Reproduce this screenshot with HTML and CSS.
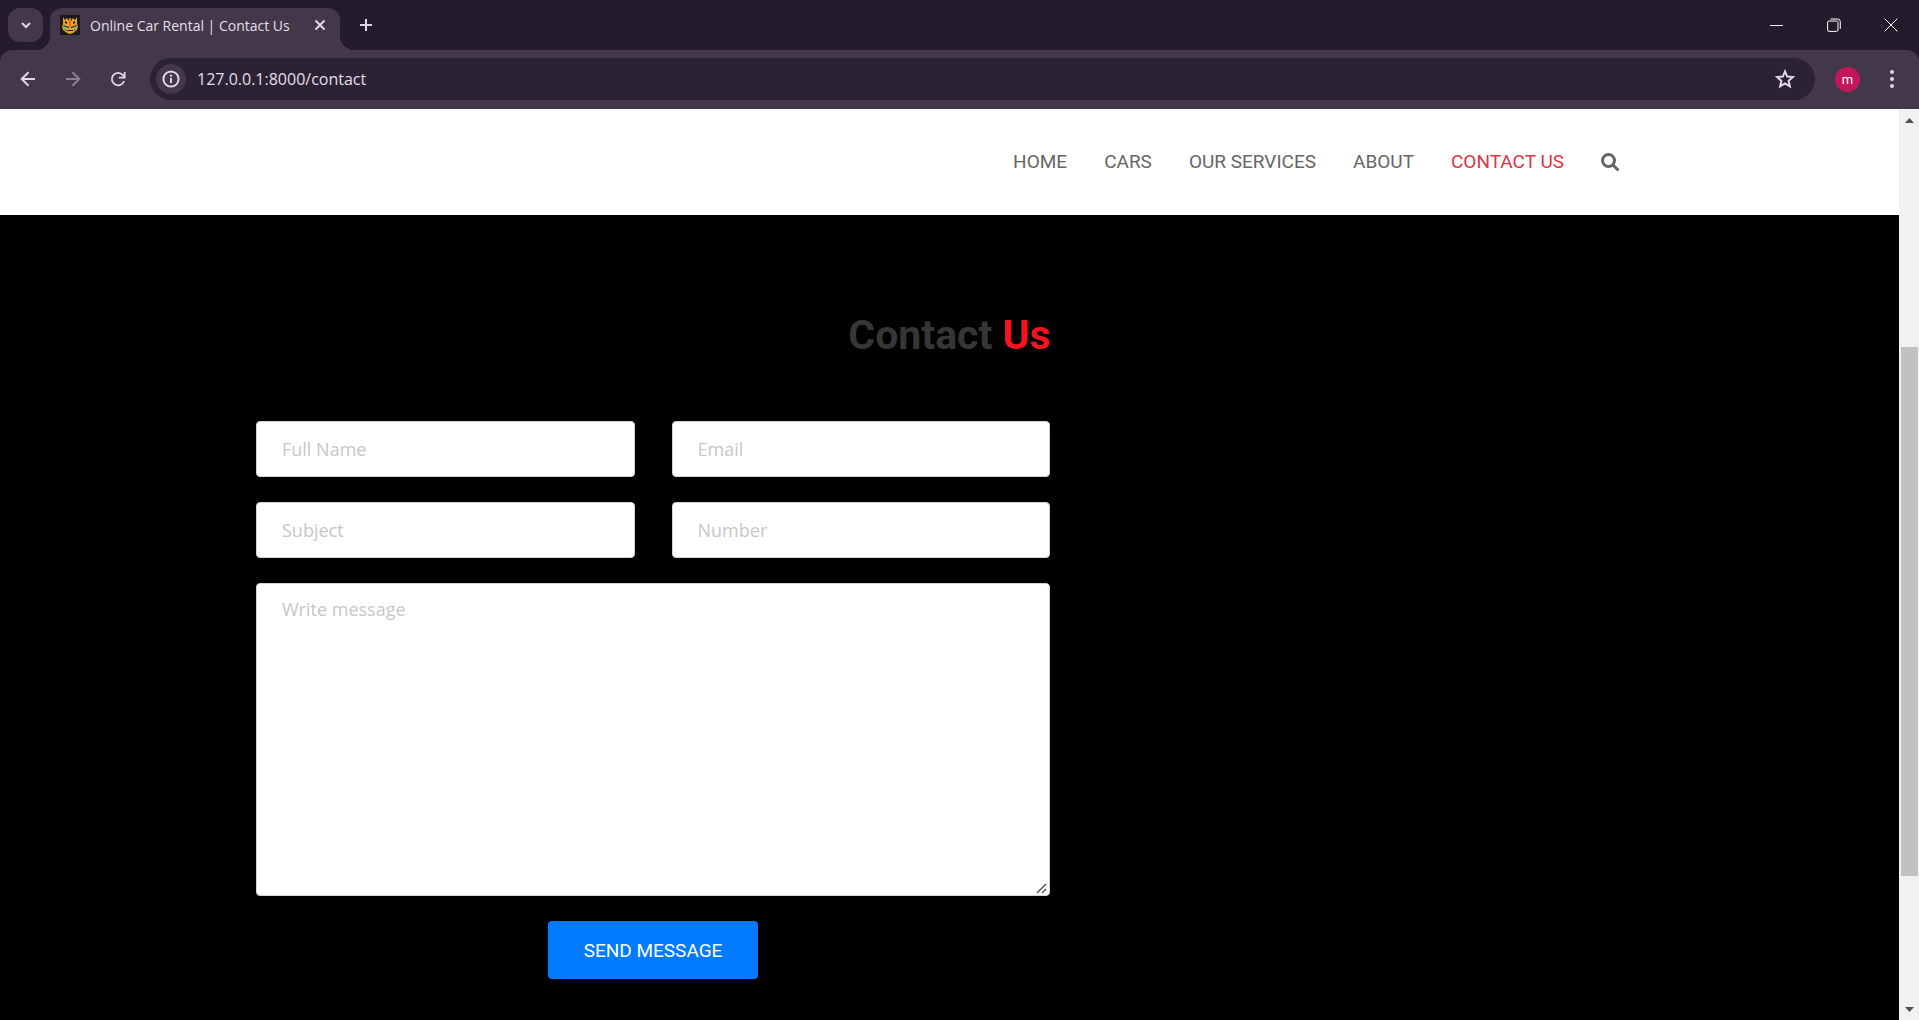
FILE: index.html
```html
<!DOCTYPE html>
<html lang="en">
<head>
<meta charset="utf-8">
<title>Online Car Rental | Contact Us</title>
<link rel="stylesheet" href="styles.css">
</head>
<body>
<header class="browser">
  <div class="tabstrip">
    <button class="tab-search" aria-label="Search tabs"><svg width="16" height="16" viewBox="0 0 16 16"><path d="M4 6l4 4 4-4"/></svg></button>
    <div class="tab">
      <svg class="favicon" width="20" height="20" viewBox="0 0 20 20"><rect width="20" height="20" fill="#171a17"/><path fill="#e9a51b" d="M3 2l2 3 2-2 2 3V3h2v3l2-3 2 2 2-3v7l1 2-1 4-4 3-3 1-3-1-4-3-1-4 1-2z"/><path fill="#f26a28" d="M9 3h2v8l-1 2-1-2z"/><path fill="#171a17" d="M5 6l2 1v2L5 8zm10 0l-2 1v2l2-1zM3 10l6 2v1l-5-1zm14 0l-6 2v1l5-1zM7 15h6v1H7zM4 14l2 1v1zm12 0l-2 1v1z"/><path fill="#36c5f0" d="M4 11l4 2-3 1zm12 0l-4 2 3 1z"/></svg>
      <span class="tab-title">Online Car Rental | Contact Us</span>
      <button class="tab-close" aria-label="Close tab"><svg width="12" height="12" viewBox="0 0 12 12"><path d="M1.500 1.500l9 9m0-9l-9 9"/></svg></button>
    </div>
    <button class="new-tab" aria-label="New tab"><svg width="14" height="14" viewBox="0 0 14 14"><path d="M7 1v12M1 7h12"/></svg></button>
    <div class="window-controls">
      <button aria-label="Minimize"><svg width="14" height="14" viewBox="0 0 14 14"><path d="M0 7.500h13"/></svg></button>
      <button aria-label="Restore"><svg width="14" height="14" viewBox="0 0 14 14"><rect x=".6" y="3" width="10.400" height="10.400" rx="1.500"/><path d="M3.500 1h7a2.800 2.800 0 0 1 2.800 2.800v7"/></svg></button>
      <button aria-label="Close"><svg width="14" height="14" viewBox="0 0 14 14"><path d="M.6.6l12.800 12.800m0-12.800L.6 13.400"/></svg></button>
    </div>
  </div>
  <div class="toolbar">
    <button class="tool" aria-label="Back"><svg width="16" height="16" viewBox="0 0 16 16"><path d="M15 8H2M8.500 1.200L1.700 8l6.800 6.800"/></svg></button>
    <button class="tool tool-disabled" aria-label="Forward"><svg width="16" height="16" viewBox="0 0 16 16"><path d="M1 8h13M7.500 1.200L14.300 8l-6.800 6.800"/></svg></button>
    <button class="tool" aria-label="Reload"><svg width="16" height="16" viewBox="0 0 18 18"><path d="M15.800 11.200A7 7 0 1 1 14.500 4.600l1.500 2M16.500 1v6.500H10"/></svg></button>
    <div class="address">
      <button class="site-info" aria-label="Site information"><svg width="18" height="18" viewBox="0 0 18 18"><circle cx="9" cy="9" r="7.600"/><path d="M9 8v5M9 4.800v2"/></svg></button>
      <input class="url" type="text" aria-label="Address" value="127.0.0.1:8000/contact">
      <button class="bookmark" aria-label="Bookmark this page"><svg width="20" height="20" viewBox="0 0 20 20"><path d="M10 2.400l2.200 5.200 5.700.5-4.300 3.700 1.300 5.600-4.900-3-4.900 3 1.300-5.600L2.100 8.100l5.700-.5z"/></svg></button>
    </div>
    <button class="avatar">m</button>
    <button class="menu" aria-label="Menu"><svg width="4" height="18" viewBox="0 0 4 18"><circle cx="2" cy="2" r="2"/><circle cx="2" cy="9" r="2"/><circle cx="2" cy="16" r="2"/></svg></button>
  </div>
</header>
<div class="viewport">
  <div class="page">
    <nav class="site-nav">
      <div class="container nav-links">
        <a href="#">HOME</a>
        <a href="#">CARS</a>
        <a href="#">OUR SERVICES</a>
        <a href="#">ABOUT</a>
        <a class="active" href="#">CONTACT US</a>
        <a href="#" aria-label="Search"><svg width="18" height="18" viewBox="0 0 18 18"><circle cx="7.500" cy="7.500" r="6"/><path d="M12 12l4.500 4.500"/></svg></a>
      </div>
    </nav>
    <main class="contact">
      <h1>Contact <span>Us</span></h1>
      <div class="container grid">
        <form class="form">
          <input type="text" placeholder="Full Name" aria-label="Full Name">
          <input type="email" placeholder="Email" aria-label="Email">
          <input type="text" placeholder="Subject" aria-label="Subject">
          <input type="text" placeholder="Number" aria-label="Number">
          <textarea placeholder="Write message" aria-label="Write message"></textarea>
          <button type="submit">SEND MESSAGE</button>
        </form>
      </div>
    </main>
  </div>
  <div class="scrollbar">
    <svg width="9" height="5" viewBox="0 0 9 5"><path d="M0 5l4.500-5L9 5z"/></svg>
    <div class="track"><div class="thumb"></div></div>
    <svg width="9" height="5" viewBox="0 0 9 5"><path d="M0 0l4.500 5L9 0z"/></svg>
  </div>
</div>
</body>
</html>
```
FILE: styles.css
```css
* { box-sizing: border-box; }
body { margin: 0; height: 100vh; display: flex; flex-direction: column; overflow: hidden; background: #000; }
button { border: 0; padding: 0; background: none; display: flex; align-items: center; justify-content: center; flex: none; }
svg { display: block; flex: none; }

.browser { background: #241b2d; color: #e6dfe9; font-family: "Open Sans", sans-serif; flex: none; }
.browser svg:not(.favicon) { fill: none; stroke: #e0d6e6; stroke-width: 2; }
.tabstrip { height: 50px; display: flex; align-items: center; padding-left: 8px; }
.tab-search { width: 35px; height: 34px; border-radius: 12px; background: #42384a; }
.tab { position: relative; align-self: flex-end; height: 42px; width: 290px; margin-left: 7px; padding: 0 14px 8px 10px; display: flex; align-items: center; background: #42384a; border-radius: 12px 12px 0 0; }
.tab::before, .tab::after { content: ""; position: absolute; bottom: 0; width: 14px; height: 14px; }
.tab::before { left: -14px; background: radial-gradient(circle at 0 0, transparent 14px, #42384a 14px); }
.tab::after { right: -14px; background: radial-gradient(circle at 100% 0, transparent 14px, #42384a 14px); }
.tab-title { flex: 1; margin-left: 10px; font-size: 14px; white-space: nowrap; }
.new-tab { width: 52px; height: 34px; }
.window-controls { margin-left: auto; display: flex; }
.window-controls button { width: 57px; height: 48px; }
.browser .window-controls svg { stroke: #fff; stroke-width: 1; }

.toolbar { height: 59px; padding: 0 15px 1px 5px; display: flex; align-items: center; background: #42384a; border-radius: 12px 12px 0 0; }
.tool { width: 45px; height: 40px; }
.tool-disabled { opacity: .45; }
.address { flex: 1; height: 42px; margin: 0 20px 0 10px; padding: 0 20px 0 6px; display: flex; align-items: center; background: #2b2334; border-radius: 21px; }
.site-info { width: 30px; height: 30px; border-radius: 50%; background: #42384a; }
.url { flex: 1; min-width: 0; margin-left: 11px; padding: 0; border: 0; background: none; color: #e6dfe9; font: 16px "Open Sans", sans-serif; }
.avatar { width: 25px; height: 25px; border-radius: 50%; background: #c2185b; color: #fff; font: 13px Roboto, sans-serif; }
.menu { width: 24px; height: 30px; margin-left: 20px; }
.browser .menu svg { fill: #e0d6e6; stroke: none; }

.viewport { flex: 1; min-height: 0; display: flex; }
.page { flex: 1; min-width: 0; font-family: Roboto, sans-serif; }
.container { width: 100%; max-width: 1425px; margin: 0 auto; padding: 0 19px; }
.site-nav { height: 106px; background: #fff; display: flex; align-items: center; }
.nav-links { display: flex; justify-content: flex-end; align-items: center; gap: 37px; padding-right: 43px; }
.nav-links a { color: #666; font-size: 19px; line-height: 30px; text-decoration: none; }
.nav-links .active { color: #dc3545; }
.nav-links svg { fill: none; stroke: #666; stroke-width: 3; stroke-linecap: round; }

.contact { padding-top: 94px; }
h1 { margin: 0 0 60px; font-size: 41px; line-height: 52px; font-weight: 700; text-align: center; color: #363636; }
h1 span { color: #f6121e; }
.grid { display: grid; grid-template-columns: repeat(12, minmax(0, 1fr)); column-gap: 36px; }
.form { grid-column: span 7; display: grid; grid-template-columns: 1fr 1fr; gap: 25px 37px; }
.form input, .form textarea { width: 100%; min-width: 0; height: 56px; padding: 0 25px; border: 1px solid #ced4da; border-radius: 4px; background: #fff; font: 18px "Open Sans", sans-serif; }
.form textarea { display: block; grid-column: span 2; height: 313px; padding: 13px 25px; }
.form textarea::-webkit-resizer { background: url("data:image/svg+xml,%3Csvg xmlns='http://www.w3.org/2000/svg' width='15' height='15'%3E%3Cpath d='M3 13l9-9M8 13l4-4' stroke='%23555' stroke-width='1.500' fill='none'/%3E%3C/svg%3E") no-repeat right bottom; }
.form ::placeholder { color: #c7c7c7; }
.form button { grid-column: span 2; justify-self: center; height: 58px; padding: 0 36px; border-radius: 4px; background: #007bff; color: #fff; font: 19px Roboto, sans-serif; }

.scrollbar { width: 20px; padding: 9px 0 8px; display: flex; flex-direction: column; align-items: center; background: #f1f1f1; }
.scrollbar svg { fill: #505050; }
.track { flex: 1; width: 17px; display: grid; grid-template-rows: 224fr 529fr 131fr; }
.thumb { grid-row: 2; background: #c1c1c1; }
```
